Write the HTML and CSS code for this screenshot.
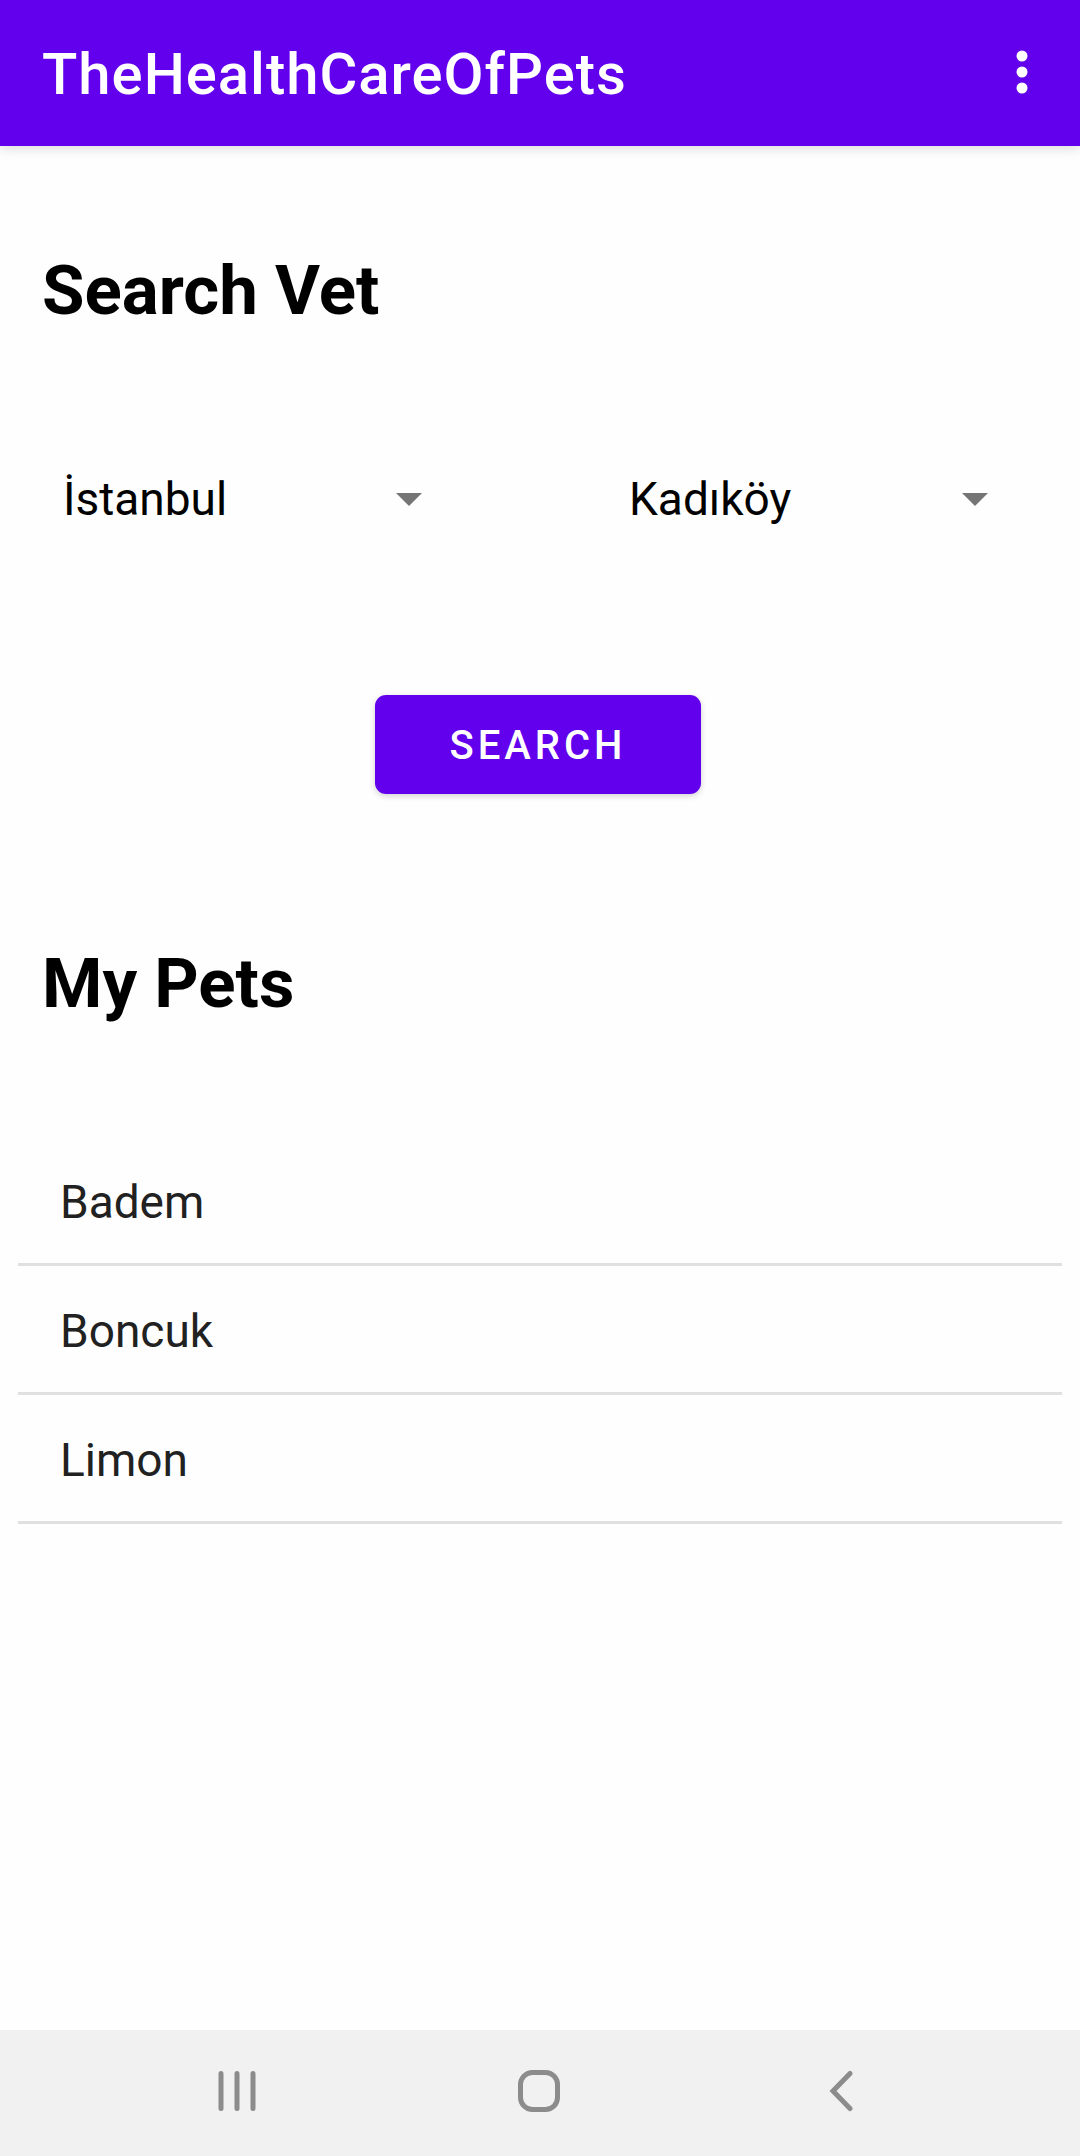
FILE: index.html
```html
<!DOCTYPE html>
<html lang="tr">
<head>
<meta charset="utf-8">
<meta name="viewport" content="width=device-width, initial-scale=1">
<title>TheHealthCareOfPets</title>
<link rel="stylesheet" href="styles.css">
</head>
<body>
<header class="app-bar">
  <h1 class="app-title">TheHealthCareOfPets</h1>
  <button class="icon-button" type="button" aria-label="More options">
    <svg width="64" height="64" viewBox="0 0 64 64" fill="currentColor" aria-hidden="true">
      <circle cx="32" cy="16" r="5.5"/><circle cx="32" cy="32" r="5.5"/><circle cx="32" cy="48" r="5.5"/>
    </svg>
  </button>
</header>

<main class="content">
  <h2 class="section-title">Search Vet</h2>
  <form class="search-form">
    <div class="filters">
      <div class="picker">
        <select class="picker-select" aria-label="City"><option>İstanbul</option></select>
        <svg class="picker-arrow" width="26" height="13" viewBox="0 0 26 13" aria-hidden="true"><path d="M0 0h26L13 13z"/></svg>
      </div>
      <div class="picker">
        <select class="picker-select" aria-label="District"><option>Kadıköy</option></select>
        <svg class="picker-arrow" width="26" height="13" viewBox="0 0 26 13" aria-hidden="true"><path d="M0 0h26L13 13z"/></svg>
      </div>
    </div>
    <button class="search-button" type="button">SEARCH</button>
  </form>

  <h2 class="section-title">My Pets</h2>
  <ul class="pet-list">
    <li class="pet">Badem</li>
    <li class="pet">Boncuk</li>
    <li class="pet">Limon</li>
  </ul>
</main>

<nav class="system-nav" aria-label="System">
  <button class="nav-button" type="button" aria-label="Recent apps">
    <svg width="42" height="42" viewBox="0 0 42 42" aria-hidden="true"><path d="M5 3.500v35M21 3.500v35M37 3.500v35" stroke-linecap="round"/></svg>
  </button>
  <button class="nav-button" type="button" aria-label="Home">
    <svg width="42" height="42" viewBox="0 0 42 42" aria-hidden="true"><rect x="2.500" y="2.500" width="37" height="37" rx="12"/></svg>
  </button>
  <button class="nav-button" type="button" aria-label="Back">
    <svg width="42" height="42" viewBox="0 0 42 42" aria-hidden="true"><path d="M30 3.500L13 21l17 17.500" stroke-linecap="round"/></svg>
  </button>
</nav>
</body>
</html>
```
FILE: styles.css
```css
* {
  box-sizing: border-box;
}

body {
  display: flex;
  flex-direction: column;
  min-height: 100vh;
  margin: 0;
  background: #fefefe;
  color: #000;
  font-family: Roboto, "Noto Sans", sans-serif;
  font-size: 46px;
  line-height: 54px;
}

button,
select {
  margin: 0;
  padding: 0;
  border: 0;
  background: none;
  color: inherit;
  font: inherit;
}

.app-bar {
  display: flex;
  align-items: flex-start;
  justify-content: space-between;
  padding: 38px 26px 36px 42px;
  background: #6200ee;
  color: #fff;
  box-shadow: 0 2px 12px rgba(0, 0, 0, 0.15);
}

.app-title {
  margin: 0;
  font-size: 58px;
  font-weight: 500;
  letter-spacing: 1px;
  line-height: 72px;
}

.icon-button {
  display: flex;
  height: 68px;
  align-items: center;
}

.content {
  flex: 1;
  padding: 105px 18px 0;
}

.section-title {
  margin: 0;
  padding: 0 24px;
  font-size: 69px;
  font-weight: 700;
  line-height: 80px;
}

.search-form {
  display: flex;
  flex-direction: column;
  align-items: center;
  padding: 125px 49px 150px 45px;
}

.filters {
  display: flex;
  justify-content: space-between;
  align-self: stretch;
  padding-right: 25px;
}

.picker {
  display: grid;
  flex: 0 1 359px;
  align-items: center;
}

.picker-select,
.picker-arrow {
  grid-area: 1 / 1;
}

.picker-select {
  width: 100%;
  height: 86px;
  appearance: none;
}

.picker-arrow {
  justify-self: end;
  fill: #757575;
  pointer-events: none;
}

.search-button {
  width: 326px;
  height: 99px;
  margin-top: 153px;
  padding-top: 3px;
  border-radius: 11px;
  background: #6200ee;
  color: #fff;
  font-size: 40px;
  font-weight: 500;
  letter-spacing: 4px;
  box-shadow: 0 2px 6px rgba(0, 0, 0, 0.18);
}

.pet-list {
  margin: 0;
  padding: 113px 0 0;
  list-style: none;
}

.pet {
  padding: 38px 42px 34px;
  border-bottom: 3px solid #e0e0e0;
  color: #212121;
}

.system-nav {
  display: grid;
  grid-template-columns: repeat(3, 1fr);
  padding: 0 88px 0 86px;
  background: #f1f1f1;
}

.nav-button {
  display: flex;
  height: 126px;
  align-items: center;
  justify-content: center;
  padding-bottom: 4px;
  color: #8c8c8c;
}

.nav-button svg {
  fill: none;
  stroke: currentColor;
  stroke-width: 5;
}
```
